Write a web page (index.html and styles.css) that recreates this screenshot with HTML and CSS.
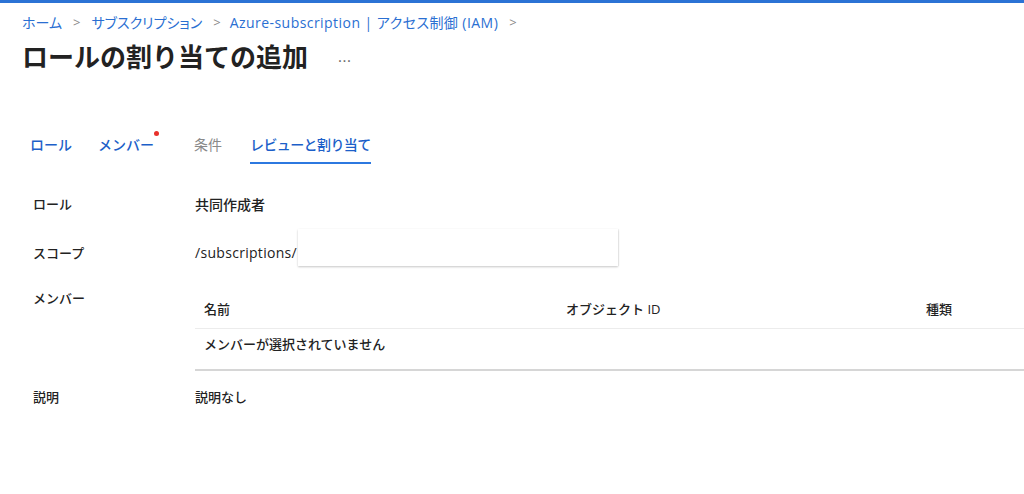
FILE: index.html
```html
<!DOCTYPE html>
<html lang="ja">
<head>
<meta charset="utf-8">
<link rel="stylesheet" href="styles.css">
</head>
<body>
<div class="topbar"></div>
<nav class="breadcrumb">
  <a>ホーム</a><span class="sep">&gt;</span><a>サブスクリプション</a><span class="sep">&gt;</span><a class="wide">Azure-subscription | アクセス制御 (IAM)</a><span class="sep">&gt;</span>
</nav>
<div class="title-row">
  <h1 class="title">ロールの割り当ての追加</h1>
  <span class="more">...</span>
</div>
<div class="tabs">
  <span class="tab">ロール</span>
  <span class="tab dot">メンバー</span>
  <span class="tab disabled">条件</span>
  <span class="tab active">レビューと割り当て</span>
</div>
<div class="details">
  <div class="row r-role">
    <div class="label">ロール</div>
    <div class="value big">共同作成者</div>
  </div>
  <div class="row r-scope">
    <div class="label">スコープ</div>
    <div class="value big scope"><span class="path">/subscriptions/</span><span class="mask"></span></div>
  </div>
  <div class="row r-members">
    <div class="label">メンバー</div>
    <div class="value table">
      <div class="thead">
        <span class="c1">名前</span><span class="c2">オブジェクト ID</span><span class="c3">種類</span>
      </div>
      <div class="tbody">メンバーが選択されていません</div>
    </div>
  </div>
  <div class="row r-desc">
    <div class="label">説明</div>
    <div class="value">説明なし</div>
  </div>
</div>
</body>
</html>
```
FILE: styles.css
```css
* { box-sizing: border-box; }
html, body { margin: 0; background: #fff; }
body {
  font-family: "Open Sans", "Noto Sans CJK JP", sans-serif;
  color: #1f1f1f;
  width: 1024px;
  overflow: hidden;
}
.topbar { height: 3px; background: #2b73d5; }
.breadcrumb {
  display: flex;
  align-items: center;
  padding-left: 22px;
  margin-top: 8px;
  height: 22px;
  font-size: 14px;
  color: #2a6fd2;
  font-feature-settings: "palt";
}
.breadcrumb .sep { color: #8a8a8a; margin: 0 11px; font-size: 13px; }
.breadcrumb .wide { letter-spacing: 0.45px; margin-left: -2px; }
.title-row {
  display: flex;
  align-items: center;
  padding-left: 22px;
  margin-top: 4px;
  height: 36px;
}
.title {
  margin: 0;
  font-family: "Noto Sans CJK JP", sans-serif;
  font-size: 26px;
  font-weight: 700;
  color: #222;
}
.more { margin-left: 30px; font-size: 15px; color: #666; position: relative; top: 1px; letter-spacing: 0.5px; }
.tabs {
  display: flex;
  padding-left: 30px;
  margin-top: 55px;
  height: 36px;
  align-items: flex-start;
}
.tab {
  font-size: 14px;
  font-weight: 500;
  color: #1c5fc9;
  padding-top: 6px;
  height: 36px;
  position: relative;
  margin-right: 26px;
}
.tab.dot { margin-right: 40px; }
.tab.dot::after {
  content: "";
  position: absolute;
  right: -5px;
  top: 3px;
  width: 5px; height: 5px;
  border-radius: 50%;
  background: #e8312b;
}
.tab.disabled { color: #8a8a8a; font-weight: 400; }
.tab.active { border-bottom: 2px solid #2c78e0; letter-spacing: -0.6px; margin-left: 2px; }
.details { padding-left: 33px; margin-top: 30px; }
.row { display: grid; grid-template-columns: 162px 1fr; font-size: 13px; }
.label { font-weight: 500; color: #222; }
.value { color: #222; font-weight: 500; }
.value.big { font-size: 14px; }
.r-role { height: 35px; }
.r-scope { height: 46px; align-items: center; }
.scope { display: flex; align-items: center; }
.path { letter-spacing: 0.3px; }
.mask {
  display: block;
  width: 320px;
  height: 37px;
  margin-left: 1px;
  background: #fff;
  box-shadow: 0 1px 2px rgba(0,0,0,0.22), 1px 0 1px rgba(0,0,0,0.04);
  position: relative;
  top: -5px;
}
.r-members { margin-top: 13px; }
.table { font-size: 13px; }
.thead {
  display: grid;
  grid-template-columns: 362px 360px 1fr;
  padding-left: 9px;
  height: 41px;
  align-items: start;
  padding-top: 11px;
  border-bottom: 1px solid #ececec;
}
.tbody {
  padding-left: 9px;
  height: 42px;
  padding-top: 5px;
  border-bottom: 2px solid #d6d6d6;
}
.r-desc { margin-top: 16px; }
```
